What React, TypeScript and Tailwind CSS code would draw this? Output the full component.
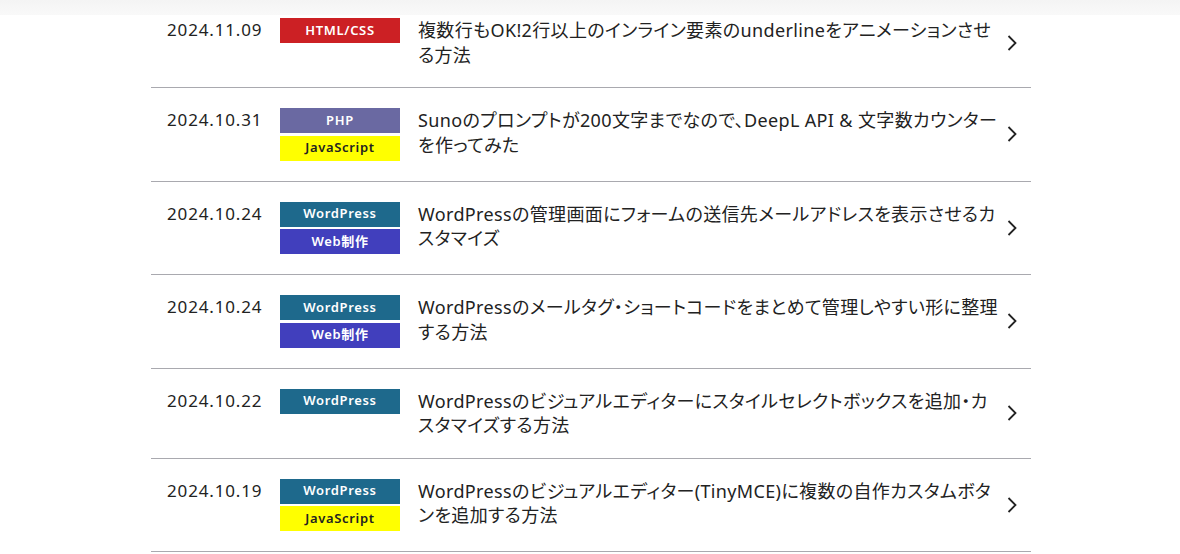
import React from "react";

type Tag = { label: string; cls: string };

const TAGS: Record<string, Tag> = {
  html: { label: "HTML/CSS", cls: "bg-[#cc2024] text-white" },
  php: { label: "PHP", cls: "bg-[#6a69a2] text-white" },
  js: { label: "JavaScript", cls: "bg-[#ffff00] text-[#222]" },
  wp: { label: "WordPress", cls: "bg-[#1e698c] text-white" },
  web: { label: "Web制作", cls: "bg-[#413fbd] text-white" },
};

const POSTS: { date: string; tags: string[]; lines: string[] }[] = [
  {
    date: "2024.11.09",
    tags: ["html"],
    lines: ["複数行もOK!2行以上のインライン要素のunderlineをアニメーションさせ", "る方法"],
  },
  {
    date: "2024.10.31",
    tags: ["php", "js"],
    lines: ["Sunoのプロンプトが200文字までなので、DeepL API & 文字数カウンター", "を作ってみた"],
  },
  {
    date: "2024.10.24",
    tags: ["wp", "web"],
    lines: ["WordPressの管理画面にフォームの送信先メールアドレスを表示させるカ", "スタマイズ"],
  },
  {
    date: "2024.10.24",
    tags: ["wp", "web"],
    lines: ["WordPressのメールタグ・ショートコードをまとめて管理しやすい形に整理", "する方法"],
  },
  {
    date: "2024.10.22",
    tags: ["wp"],
    lines: ["WordPressのビジュアルエディターにスタイルセレクトボックスを追加・カ", "スタマイズする方法"],
  },
  {
    date: "2024.10.19",
    tags: ["wp", "js"],
    lines: ["WordPressのビジュアルエディター(TinyMCE)に複数の自作カスタムボタ", "ンを追加する方法"],
  },
];

function Chevron() {
  return (
    <svg width="12" height="18" viewBox="0 0 12 18" className="shrink-0">
      <polyline points="2.5,2 9.5,9 2.5,16" fill="none" stroke="#222" strokeWidth="1.8" />
    </svg>
  );
}

export default function App() {
  return (
    <div className="relative h-[554px] overflow-hidden bg-white text-[#222]">
      <div className="pointer-events-none absolute left-0 right-0 top-0 z-10 h-[15px] bg-gradient-to-b from-[#f4f4f4] to-[#f9f9f9]" />
      <ul className="ml-[151px] mt-[-2px] w-[880px]">
        {POSTS.map((p, i) => (
          <li key={i} className="flex items-center border-b border-[#a9a9af] py-[20px] pl-[16px] pr-[13px]">
            <div
              className="w-[113px] shrink-0 self-start text-[17px] leading-[24.5px] tracking-[0.05em] text-[#222]"
              style={{ fontFamily: '"Noto Sans", sans-serif' }}
            >
              {p.date}
            </div>
            <div className="flex w-[120px] shrink-0 flex-col gap-[2.5px] self-start">
              {p.tags.map((t) => (
                <span
                  key={t}
                  className={`flex h-[25px] items-center justify-center text-[13px] font-semibold tracking-[0.05em] ${TAGS[t].cls}`}
                  style={{ fontFamily: '"Noto Sans", "Noto Sans CJK JP", sans-serif' }}
                >
                  {TAGS[t].label}
                </span>
              ))}
            </div>
            <div
              className="ml-[18px] flex-1 self-start whitespace-nowrap text-[18px] leading-[24.5px] tracking-[0.02em] text-[#222] [font-feature-settings:'palt']"
              style={{ fontFamily: '"Noto Sans", "Noto Sans CJK JP", sans-serif' }}
            >
              {p.lines.map((l, j) => (
                <span key={j} className="block">
                  {l}
                </span>
              ))}
            </div>
            <Chevron />
          </li>
        ))}
      </ul>
    </div>
  );
}
